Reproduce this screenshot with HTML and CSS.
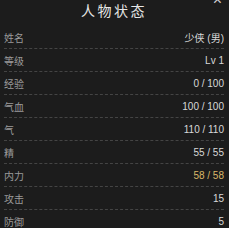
FILE: index.html
```html
<!DOCTYPE html>
<html lang="zh">
<head>
    <meta charset="UTF-8">
    <meta name="viewport" content="width=device-width, initial-scale=1.0">
    <title>人物状态</title>
    <link rel="stylesheet" href="styles.css">
</head>
<body>
    <div class="panel">
        <button class="close-btn">&times;</button>
        <h2 class="panel-title">人物状态</h2>
        <ul class="stats">
            <li><span class="label">姓名</span><span class="value">少侠 (男)</span></li>
            <li><span class="label">等级</span><span class="value">Lv 1</span></li>
            <li><span class="label">经验</span><span class="value">0 / 100</span></li>
            <li><span class="label">气血</span><span class="value">100 / 100</span></li>
            <li><span class="label">气</span><span class="value">110 / 110</span></li>
            <li><span class="label">精</span><span class="value">55 / 55</span></li>
            <li><span class="label">内力</span><span class="value gold">58 / 58</span></li>
            <li><span class="label">攻击</span><span class="value">15</span></li>
            <li><span class="label">防御</span><span class="value">5</span></li>
        </ul>
    </div>
</body>
</html>
```

FILE: styles.css
```css
* {
    margin: 0;
    padding: 0;
    box-sizing: border-box;
}
body {
    background-color: #1c1c1c;
    font-family: "Liberation Sans", "Noto Sans CJK SC", sans-serif;
    color: #dcdcdc;
    overflow: hidden;
}
.panel {
    position: relative;
    padding: 0 5px 0 4px;
}
.close-btn {
    position: absolute;
    top: -9px;
    right: 7px;
    background: none;
    border: none;
    color: #cfcfcf;
    font-size: 16px;
    font-family: "Liberation Sans", sans-serif;
    cursor: pointer;
}
.panel-title {
    text-align: center;
    font-size: 14px;
    font-weight: normal;
    letter-spacing: 2.5px;
    color: #e6e6e6;
    height: 26px;
    line-height: 22px;
}
.stats {
    list-style: none;
}
.stats li {
    display: flex;
    justify-content: space-between;
    align-items: center;
    height: 23px;
    font-size: 10px;
    border-bottom: 1px dashed #444;
}
.stats .label {
    color: #9a9a9a;
}
.stats .value {
    color: #d8d8d8;
}
.stats .value.gold {
    color: #d9b868;
}
```
